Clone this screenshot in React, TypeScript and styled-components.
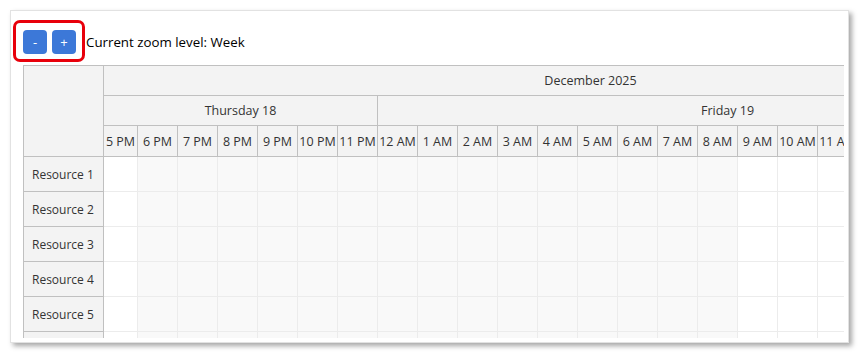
import React from 'react';
import styled, { createGlobalStyle } from 'styled-components';

const GlobalStyle = createGlobalStyle`
  body {
    margin: 0;
    background: #ffffff;
    font-family: 'Open Sans', 'Noto Sans', sans-serif;
    color: #333333;
  }
`;

const HEADER_BG = '#f3f3f3';
const HEADER_LINE = '#c0c0c0';
const CELL_LINE = '#ececec';
const OFF_HOURS_BG = '#f9f9f9';

const Page = styled.div`
  padding: 10px;
`;

const Panel = styled.div`
  position: relative;
  box-sizing: border-box;
  width: 839px;
  height: 333px;
  padding: 20px 0 0 12px;
  background: #ffffff;
  border: 1px solid #e2e2e2;
  box-shadow: 3px 3px 5px rgba(0, 0, 0, 0.35);
  overflow: hidden;
`;

const Toolbar = styled.div`
  display: flex;
  align-items: center;
  gap: 5px;
  height: 24px;
  margin-top: -1px;
  margin-bottom: 11px;
`;

const ZoomButton = styled.button`
  width: 24px;
  height: 24px;
  padding: 0;
  border: none;
  border-radius: 4px;
  background: #3c78d8;
  color: #ffffff;
  font-family: 'Open Sans', sans-serif;
  font-size: 13px;
  line-height: 24px;
`;

const ZoomLabel = styled.span`
  margin-left: 5px;
  font-size: 13.3px;
  color: #000000;
`;

const Highlight = styled.div`
  position: absolute;
  left: 2px;
  top: 9px;
  width: 72px;
  height: 42px;
  box-sizing: border-box;
  border: 3px solid #e8000b;
  border-radius: 7px;
  pointer-events: none;
`;

const Scheduler = styled.div`
  display: flex;
  width: 821px;
  height: 273px;
  overflow: hidden;
  font-size: 12px;
  color: #333333;
`;

const RowHeaders = styled.div`
  flex: 0 0 81px;
  box-sizing: border-box;
  border-left: 1px solid ${HEADER_LINE};
  border-top: 1px solid ${HEADER_LINE};
  border-right: 1px solid ${HEADER_LINE};
  background: ${HEADER_BG};
`;

const Corner = styled.div`
  height: 91px;
  box-sizing: border-box;
  border-bottom: 1px solid ${HEADER_LINE};
`;

const ResourceName = styled.div`
  height: 35px;
  box-sizing: border-box;
  padding-left: 8px;
  display: flex;
  align-items: center;
  border-bottom: 1px solid ${HEADER_LINE};
  font-size: 12px;
`;

const Timeline = styled.div`
  flex: 1 1 auto;
  overflow: hidden;
  border-top: 1px solid ${HEADER_LINE};
`;

const TimelineInner = styled.div`
  width: 974px;
`;

const HeaderRow = styled.div<{ $height: number }>`
  display: flex;
  height: ${(p) => p.$height}px;
  background: ${HEADER_BG};
  box-sizing: border-box;
  border-bottom: 1px solid ${HEADER_LINE};
`;

const HeaderCell = styled.div<{ $width: number }>`
  flex: 0 0 ${(p) => p.$width}px;
  box-sizing: border-box;
  border-right: 1px solid ${HEADER_LINE};
  display: flex;
  align-items: center;
  justify-content: center;
  white-space: nowrap;
  overflow: visible;
  font-size: 12.5px;
`;

const BodyRow = styled.div`
  display: flex;
  height: 35px;
`;

const BodyCell = styled.div<{ $width: number; $business: boolean }>`
  flex: 0 0 ${(p) => p.$width}px;
  box-sizing: border-box;
  border-right: 1px solid ${CELL_LINE};
  border-bottom: 1px solid ${CELL_LINE};
  background: ${(p) => (p.$business ? '#ffffff' : OFF_HOURS_BG)};
`;

type Hour = { label: string; width: number; business: boolean };

const hours: Hour[] = [
  { label: '5 PM', width: 34, business: true },
  ...['6 PM', '7 PM', '8 PM', '9 PM', '10 PM', '11 PM'].map((label) => ({
    label,
    width: 40,
    business: false,
  })),
  ...[
    '12 AM',
    '1 AM',
    '2 AM',
    '3 AM',
    '4 AM',
    '5 AM',
    '6 AM',
    '7 AM',
    '8 AM',
    '9 AM',
    '10 AM',
    '11 AM',
  ].map((label, i) => ({ label, width: 40, business: i >= 9 })),
];

const resources = [
  'Resource 1',
  'Resource 2',
  'Resource 3',
  'Resource 4',
  'Resource 5',
];

export default function App() {
  return (
    <Page>
      <GlobalStyle />
      <Panel>
        <Toolbar>
          <ZoomButton>-</ZoomButton>
          <ZoomButton>+</ZoomButton>
          <ZoomLabel>Current zoom level: Week</ZoomLabel>
        </Toolbar>
        <Highlight />
        <Scheduler>
          <RowHeaders>
            <Corner />
            {resources.map((name) => (
              <ResourceName key={name}>{name}</ResourceName>
            ))}
            {/* next row, only its top edge is visible */}
            <ResourceName />
          </RowHeaders>
          <Timeline>
            <TimelineInner>
              <HeaderRow $height={30}>
                <HeaderCell $width={974}>December 2025</HeaderCell>
              </HeaderRow>
              <HeaderRow $height={30}>
                <HeaderCell $width={274}>Thursday 18</HeaderCell>
                <HeaderCell $width={700}>Friday 19</HeaderCell>
              </HeaderRow>
              <HeaderRow $height={31}>
                {hours.map((h, i) => (
                  <HeaderCell key={i} $width={h.width}>
                    {h.label}
                  </HeaderCell>
                ))}
              </HeaderRow>
              {[...resources, 'next'].map((name) => (
                <BodyRow key={name}>
                  {hours.map((h, i) => (
                    <BodyCell key={i} $width={h.width} $business={h.business} />
                  ))}
                </BodyRow>
              ))}
            </TimelineInner>
          </Timeline>
        </Scheduler>
      </Panel>
    </Page>
  );
}
